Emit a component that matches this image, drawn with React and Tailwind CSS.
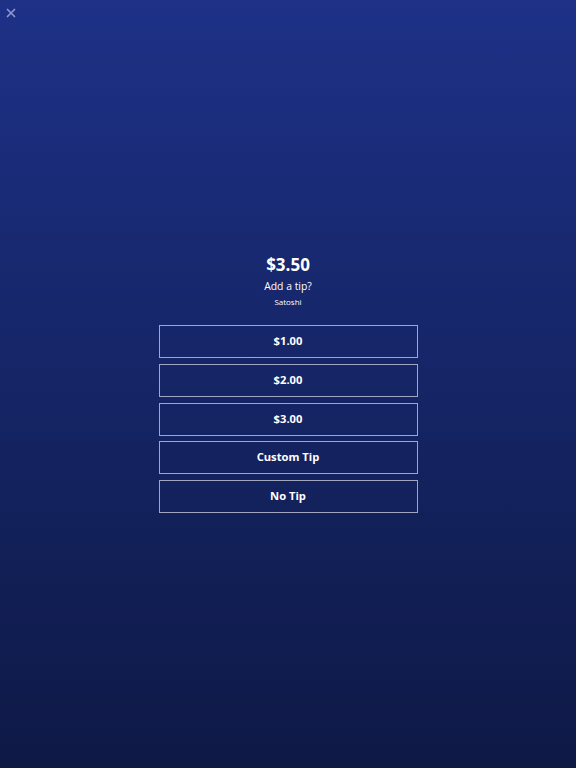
import { X } from 'lucide-react'

const TIPS = ['$1.00', '$2.00', '$3.00', 'Custom Tip', 'No Tip']

export default function App() {
  return (
    <div
      className="relative flex h-[768px] w-full flex-col items-center justify-center bg-gradient-to-b from-[#1d3187] to-[#0e1946] pb-[1px] text-white"
      style={{ fontFamily: '"Open Sans", "Noto Sans", sans-serif' }}
    >
      <button className="absolute left-[4px] top-[6px] p-0 text-[#8c96cc]" aria-label="Close">
        <X size={14} strokeWidth={3} />
      </button>

      <div className="flex flex-col items-center">
        <h1 className="text-[17px] font-bold leading-[22px]">$3.50</h1>
        <p className="mt-[2px] text-[10.4px] leading-[16px]">Add a tip?</p>
        <p className="mt-[2px] text-[8px] leading-[12px]">Satoshi</p>
      </div>

      <div className="mt-[17px] flex w-[259px] flex-col gap-[5.8px]">
        {TIPS.map((t) => (
          <button
            key={t}
            className="h-[33px] w-full border border-white/60 text-[11.2px] font-bold"
          >
            {t}
          </button>
        ))}
      </div>
    </div>
  )
}
